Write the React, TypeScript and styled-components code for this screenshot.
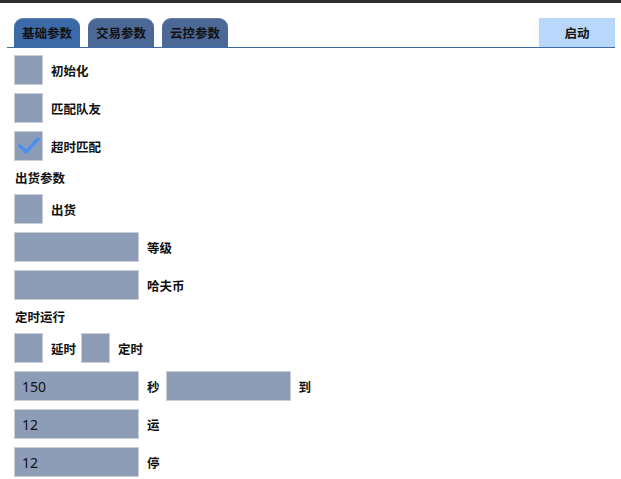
import React, { ReactElement } from "react";
import styled, { createGlobalStyle } from "styled-components";

const GlobalStyle = createGlobalStyle`
  html, body {
    margin: 0;
    padding: 0;
    background: #ffffff;
  }
  body {
    font-family: "Noto Sans CJK SC", "Noto Sans", sans-serif;
    color: #111111;
  }
`;

const Page = styled.div`
  width: 621px;
  height: 479px;
  overflow: hidden;
  border-top: 3px solid #2c2c2e;
  box-sizing: border-box;
`;

const TabBar = styled.div`
  display: flex;
  align-items: flex-end;
  margin: 15px 6px 0 7px;
  border-bottom: 1.5px solid #3f6aa6;
  padding-left: 7px;
`;

const Tab = styled.div<{ $active?: boolean }>`
  width: 66px;
  height: 29px;
  margin-right: 8px;
  border-radius: 9px 9px 0 0;
  background: ${(p) => (p.$active ? "#3c6aa9" : "#4b6897")};
  font-size: 12.5px;
  font-weight: 700;
  display: flex;
  align-items: center;
  justify-content: center;
  box-shadow: inset 0 1px 0 rgba(255, 255, 255, 0.15);
`;

const Spacer = styled.div`
  flex: 1;
`;

const StartButton = styled.button`
  width: 76px;
  height: 29px;
  border: none;
  background: #b9d7fb;
  font-family: inherit;
  font-size: 12.5px;
  font-weight: 700;
  color: #111;
  padding: 0;
`;

const Content = styled.div`
  padding: 7px 0 0 14px;
  display: flex;
  flex-direction: column;
  gap: 8px;
`;

const Row = styled.div`
  display: flex;
  align-items: center;
  height: 30px;
`;

const Box = styled.div`
  width: 29px;
  height: 30px;
  box-sizing: border-box;
  background: #8e9db7;
  border: 1px solid #c9ced8;
  display: flex;
  align-items: center;
  justify-content: center;
  flex: none;
`;

const Label = styled.span<{ $gap?: number }>`
  font-size: 12.5px;
  font-weight: 700;
  margin-left: 8px;
  margin-right: ${(p) => p.$gap ?? 0}px;
  white-space: nowrap;
`;

const Heading = styled.div`
  font-size: 12.5px;
  font-weight: 700;
  height: 15px;
  line-height: 15px;
  margin: 1px 0 1px 1px;
`;

const Field = styled.input`
  width: 125px;
  height: 30px;
  box-sizing: border-box;
  background: #8e9db7;
  border: 1px solid #c9ced8;
  padding: 0 0 0 7px;
  font-family: "Noto Sans", sans-serif;
  font-size: 14px;
  color: #111;
  outline: none;
  flex: none;
`;

const Check = () => (
  <svg width="22" height="20" viewBox="0 0 22 20">
    <path
      d="M2 10 L8 16 L20 3"
      fill="none"
      stroke="#4a90f0"
      strokeWidth="3.5"
      strokeLinecap="round"
      strokeLinejoin="round"
    />
  </svg>
);

const CheckRow = ({ label, checked }: { label: string; checked?: boolean }) => (
  <Row>
    <Box>{checked && <Check />}</Box>
    <Label>{label}</Label>
  </Row>
);

const FieldRow = ({ value, label }: { value: string; label: string }) => (
  <Row>
    <Field defaultValue={value} />
    <Label>{label}</Label>
  </Row>
);

const App = (): ReactElement => {
  return (
    <Page>
      <GlobalStyle />
      <TabBar>
        <Tab $active>基础参数</Tab>
        <Tab>交易参数</Tab>
        <Tab>云控参数</Tab>
        <Spacer />
        <StartButton>启动</StartButton>
      </TabBar>

      <Content>
        <CheckRow label="初始化" />
        <CheckRow label="匹配队友" />
        <CheckRow label="超时匹配" checked />

        <Heading>出货参数</Heading>
        <CheckRow label="出货" />
        <FieldRow value="" label="等级" />
        <FieldRow value="" label="哈夫币" />

        <Heading>定时运行</Heading>
        <Row>
          <Box />
          <Label $gap={5}>延时</Label>
          <Box />
          <Label>定时</Label>
        </Row>
        <Row>
          <Field defaultValue="150" />
          <Label $gap={6}>秒</Label>
          <Field defaultValue="" />
          <Label>到</Label>
        </Row>
        <FieldRow value="12" label="运" />
        <FieldRow value="12" label="停" />
      </Content>
    </Page>
  );
};

export default App;
